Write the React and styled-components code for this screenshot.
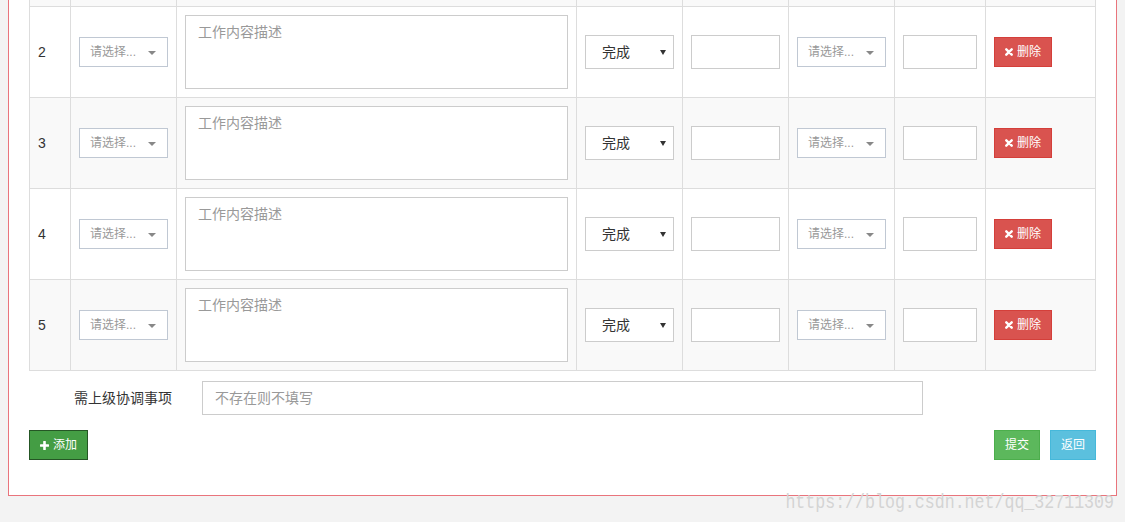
import React from "react";
import styled, { createGlobalStyle } from "styled-components";

const GlobalStyle = createGlobalStyle`
  html, body {
    margin: 0;
    padding: 0;
    background: #f3f3f3;
    overflow: hidden;
  }
  body {
    font-family: "Liberation Sans", "Noto Sans CJK SC", sans-serif;
    font-size: 14px;
    line-height: 20px;
    color: #333;
  }
  * {
    box-sizing: border-box;
  }
`;

const cols = "41px 106px 400px 106px 106px 106px 91px 111px";

const Page = styled.div`
  position: relative;
  height: 522px;
  padding: 0 8px;
  overflow: hidden;
`;

// the page is scrolled down: only the bottom edge of row 1 is still in view
const Panel = styled.div`
  background: #fff;
  border: 1px solid #e9747c;
  border-top: none;
  padding: 0 20px 35px;
`;

const Row = styled.div`
  display: grid;
  grid-template-columns: ${cols};
  height: ${(p) => (p.$tail ? "7px" : "91px")};
  border-bottom: 1px solid #ddd;
  background: ${(p) => (p.$striped ? "#f9f9f9" : "#fff")};
`;

const Cell = styled.div`
  display: flex;
  align-items: center;
  padding: ${(p) => (p.$tail ? "0" : "8px")};
  border-left: 1px solid #ddd;
  &:last-child {
    border-right: 1px solid #ddd;
  }
`;

const Num = styled.span`
  font-size: 14px;
  color: #333;
`;

const Select2 = styled.div`
  position: relative;
  width: 100%;
  height: 30px;
  border: 1px solid #c0c8d3;
  background: #fff;
  padding-left: 10px;
  font-size: 12px;
  line-height: 28px;
  color: #999;
`;

const Caret = styled.span`
  position: absolute;
  right: 11px;
  top: 13px;
  border-style: solid;
  border-width: 4px 4px 0;
  border-color: #888 transparent transparent;
`;

const TextArea = styled.textarea`
  display: block;
  width: 100%;
  height: 74px;
  border: 1px solid #ccc;
  padding: 6px 12px;
  resize: none;
  font-family: inherit;
  font-size: 14px;
  line-height: 20px;
  color: #555;
  &::placeholder {
    color: #999;
  }
`;

const SelectWrap = styled.div`
  position: relative;
  width: 100%;
`;

const NativeSelect = styled.select`
  appearance: none;
  display: block;
  width: 100%;
  height: 34px;
  border: 1px solid #ccc;
  border-radius: 0;
  background: #fff;
  padding: 0 0 0 16px;
  font-family: inherit;
  font-size: 14px;
  color: #333;
`;

const SelectArrow = styled.span`
  position: absolute;
  right: 8px;
  top: 15px;
  border-style: solid;
  border-width: 5px 3px 0;
  border-color: #333 transparent transparent;
  pointer-events: none;
`;

const Input = styled.input`
  display: block;
  width: ${(p) => p.$w || "100%"};
  height: 34px;
  border: 1px solid #ccc;
  padding: 6px 12px;
  font-family: inherit;
  font-size: 14px;
  line-height: 20px;
  color: #555;
  &::placeholder {
    color: #999;
  }
`;

const Btn = styled.button`
  display: inline-flex;
  align-items: center;
  gap: 4px;
  height: 30px;
  padding: 0 10px;
  border: 1px solid ${(p) => p.$border};
  background: ${(p) => p.$bg};
  color: #fff;
  font-family: inherit;
  font-size: 12px;
  line-height: 18px;
  cursor: pointer;
`;

const CoordRow = styled.div`
  display: flex;
  align-items: center;
  gap: 15px;
  margin-top: 10px;
`;

const Label = styled.label`
  width: 158px;
  padding-right: 15px;
  text-align: right;
  font-size: 14px;
  color: #333;
`;

const Actions = styled.div`
  display: flex;
  justify-content: space-between;
  margin-top: 15px;
`;

const Group = styled.div`
  display: flex;
  gap: 10px;
`;

const Watermark = styled.div`
  position: absolute;
  right: 11px;
  top: 495px;
  font-family: "Liberation Mono", monospace;
  font-size: 16.6px;
  line-height: 20px;
  color: #d4d4d4;
  transform: scaleY(1.2);
  transform-origin: bottom;
`;

const XIcon = () => (
  <svg width="8" height="8" viewBox="0 0 8 8">
    <path d="M1.3 1.3 L6.7 6.7 M6.7 1.3 L1.3 6.7" stroke="#fff" strokeWidth="2.4" strokeLinecap="round" />
  </svg>
);

const PlusIcon = () => (
  <svg width="9" height="9" viewBox="0 0 9 9">
    <path d="M4.5 0.8 V8.2 M0.8 4.5 H8.2" stroke="#fff" strokeWidth="2.6" strokeLinecap="round" />
  </svg>
);

const rows = [2, 3, 4, 5];

const App = () => {
  return (
    <>
      <GlobalStyle />
      <Page>
        <Panel>
          <Row $tail $striped>
            {Array.from({ length: 8 }).map((_, i) => (
              <Cell key={i} $tail />
            ))}
          </Row>
          {rows.map((n) => (
            <Row key={n} $striped={n % 2 === 1}>
              <Cell>
                <Num>{n}</Num>
              </Cell>
              <Cell>
                <Select2>
                  请选择...
                  <Caret />
                </Select2>
              </Cell>
              <Cell>
                <TextArea placeholder="工作内容描述" />
              </Cell>
              <Cell>
                <SelectWrap>
                  <NativeSelect defaultValue="done">
                    <option value="done">完成</option>
                    <option value="todo">未完成</option>
                  </NativeSelect>
                  <SelectArrow />
                </SelectWrap>
              </Cell>
              <Cell>
                <Input />
              </Cell>
              <Cell>
                <Select2>
                  请选择...
                  <Caret />
                </Select2>
              </Cell>
              <Cell>
                <Input />
              </Cell>
              <Cell>
                <Btn $bg="#d9534f" $border="#d43f3a">
                  <XIcon />
                  删除
                </Btn>
              </Cell>
            </Row>
          ))}
          <CoordRow>
            <Label>需上级协调事项</Label>
            <Input $w="721px" placeholder="不存在则不填写" />
          </CoordRow>
          <Actions>
            <Btn $bg="#449d44" $border="#255625">
              <PlusIcon />
              添加
            </Btn>
            <Group>
              <Btn $bg="#5cb85c" $border="#4cae4c">提交</Btn>
              <Btn $bg="#5bc0de" $border="#46b8da">返回</Btn>
            </Group>
          </Actions>
        </Panel>
        <Watermark>https://blog.csdn.net/qq_32711309</Watermark>
      </Page>
    </>
  );
};

export default App;
